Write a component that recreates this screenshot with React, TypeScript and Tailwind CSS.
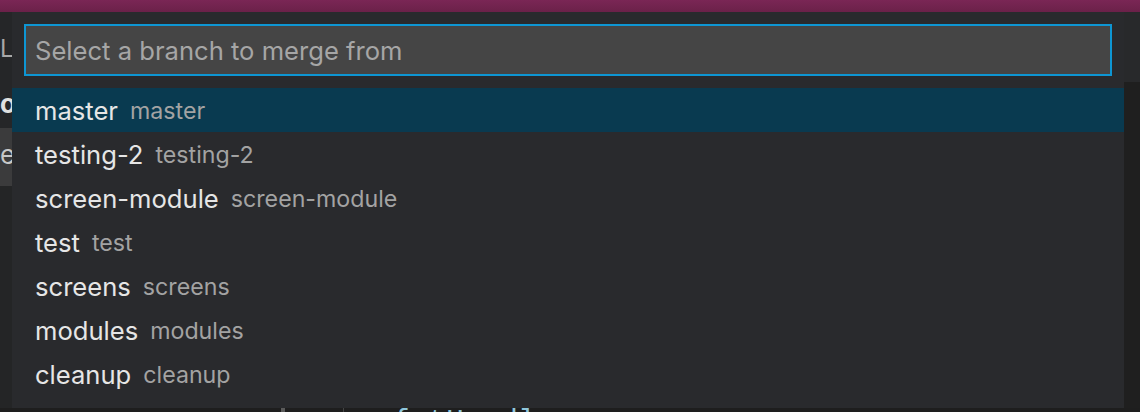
import React from 'react';

const BRANCHES = [
  'master',
  'testing-2',
  'screen-module',
  'test',
  'screens',
  'modules',
  'cleanup'
];

const FONT = "font-['Inter','Noto_Sans',sans-serif]";

export default function App() {
  return (
    <div className={`flex h-[412px] w-[1140px] flex-col overflow-hidden bg-[#1e1e1e] ${FONT}`}>
      {/* window title strip */}
      <div className="h-[12px] shrink-0 bg-gradient-to-b from-[#7a2655] to-[#6b2149]" />

      <div className="flex h-[396px] shrink-0">
        {/* sidebar peeking out on the left */}
        <div className="flex w-[12px] shrink-0 flex-col overflow-hidden bg-[#252628]">
          <div className="h-[70px] shrink-0 pt-[22px] text-[24px] leading-[30px] text-[#a8a8a8]">L</div>
          <div className="h-[46px] shrink-0 pt-[6px] text-[26px] font-bold leading-[32px] text-[#e0e0e0]">o</div>
          <div className="h-[58px] shrink-0 bg-[#3b3b3c] pt-[11px] text-[26px] leading-[32px] text-[#c8c8c8]">e</div>
          <div className="flex-1 bg-[#242526]" />
        </div>

        {/* quick pick */}
        <div className="flex w-[1112px] shrink-0 flex-col bg-[#292a2d]">
          <div className="p-[12px]">
            <div className="flex h-[52px] items-center border-2 border-[#0e96d3] bg-[#454545] pl-[9px] pt-[2px] text-[25.6px] text-[#a6a6a6]">
              Select a branch to merge from
            </div>
          </div>
          <ul className="flex flex-col">
            {BRANCHES.map((b, i) => (
              <li
                key={b}
                className={`flex h-[44px] items-center pl-[23px] pt-[2px] ${i === 0 ? 'bg-[#093a50]' : ''}`}
              >
                <span className="text-[25.6px] text-[#e6e6e6]">{b}</span>
                <span className="ml-[12px] text-[23.2px] text-[#a3a3a3]">{b}</span>
              </li>
            ))}
          </ul>
        </div>

        {/* right edge */}
        <div className="flex w-[16px] shrink-0 flex-col">
          <div className="h-[70px] bg-[#28292b]" />
          <div className="flex-1 bg-[#1f1f1f]" />
        </div>
      </div>

      {/* editor line cut off at the bottom */}
      <div className="relative h-[4px] shrink-0 overflow-hidden bg-[#1e1e1e]">
        <div className="absolute left-[281px] top-0 h-[4px] w-[4px] bg-[#5a5a5a]" />
        <div className="absolute left-[343px] top-0 h-[4px] w-px bg-[#444]" />
        <div className="absolute left-[392px] top-[-1px] font-['Liberation_Mono',monospace] text-[30px] leading-[30px] text-[#8fc6dc]">
          {'{etHandlers;'}
        </div>
      </div>
    </div>
  );
}
